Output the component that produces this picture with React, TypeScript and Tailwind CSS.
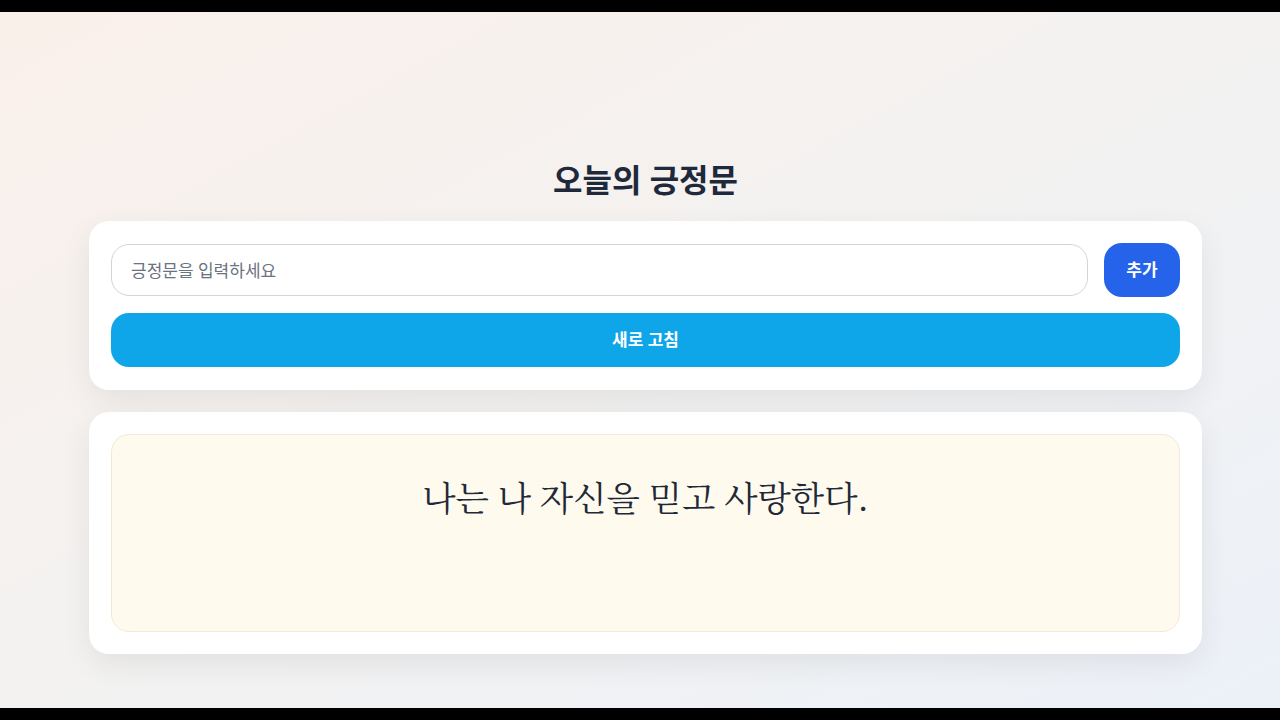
import React, { useState } from "react";

const sans = { fontFamily: '"Noto Sans", "Noto Sans CJK KR", sans-serif' };

export default function App() {
  const [text, setText] = useState("");

  return (
    <div className="h-[720px] flex flex-col bg-black" style={sans}>
      <div className="h-3 shrink-0 bg-black" />
      <main className="flex-1 bg-linear-to-br from-[#faf0ea] via-[#f3f2f1] to-[#ecf1f8] pl-[89px] pr-[78px] pt-[150px]">
        {/* 제목 */}
        <h1 className="text-center text-[32px] leading-9 font-bold text-[#1e293b] mb-[23px]">
          오늘의 긍정문
        </h1>

        {/* 입력 카드 */}
        <section className="bg-white rounded-[20px] shadow-[0_10px_30px_rgba(0,0,0,0.07)] px-[22px] pt-[22px] pb-[23px]">
          <div className="flex items-center gap-4">
            <input
              value={text}
              onChange={(e) => setText(e.target.value)}
              placeholder="긍정문을 입력하세요"
              className="flex-1 h-[52px] rounded-[18px] border border-[#d4d4d8] pl-[19px] pr-5 text-[17px] text-[#1f2937] placeholder:text-[#6b7280] outline-none"
            />
            <button className="w-[76px] h-[54px] rounded-[18px] bg-[#2563eb] text-white text-[17px] font-bold">
              추가
            </button>
          </div>
          <button className="mt-4 w-full h-[54px] rounded-[18px] bg-[#0ea5e9] text-white text-[17px] font-bold">
            새로 고침
          </button>
        </section>

        {/* 긍정문 카드 */}
        <section className="mt-[22px] bg-white rounded-[20px] shadow-[0_10px_30px_rgba(0,0,0,0.07)] p-[22px]">
          <div className="h-[198px] rounded-[18px] bg-[#fefaee] border border-[#f2ead4] pt-[39px] text-center">
            <p
              className="text-[34.5px] leading-[44px] text-[#1f2937]"
              style={{ fontFamily: '"Noto Serif CJK KR", "Noto Serif KR", "Liberation Serif", serif' }}
            >
              나는 나 자신을 믿고 사랑한다.
            </p>
          </div>
        </section>
      </main>
      <div className="h-3 shrink-0 bg-black" />
    </div>
  );
}
